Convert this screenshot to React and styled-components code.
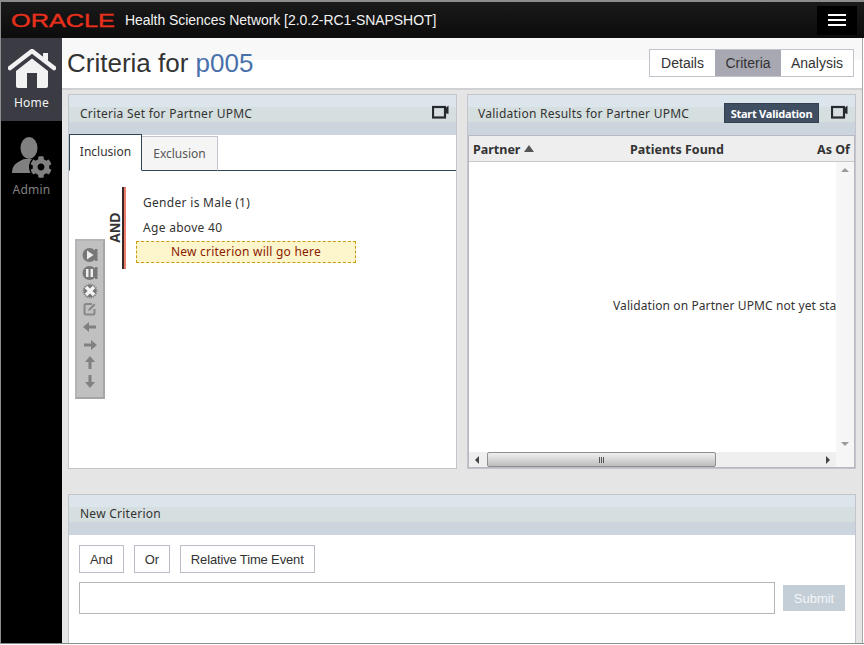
import React from 'react';
import styled, { createGlobalStyle } from 'styled-components';
import { FaCog } from 'react-icons/fa';

const GlobalStyle = createGlobalStyle`
  html, body {
    margin: 0;
    padding: 0;
    background: #fff;
  }
  * {
    box-sizing: border-box;
  }
`;

const uiFont = `"Noto Sans", "Open Sans", sans-serif`;
const arial = `"Liberation Sans", Arial, sans-serif`;

const Frame = styled.div`
  width: 864px;
  height: 644px;
  display: flex;
  flex-direction: column;
  overflow: hidden;
  border-top: 2px solid #8c8c8c;
  border-left: 1px solid #8c8c8c;
  border-bottom: 1px solid #8c8c8c;
  font-family: ${uiFont};
`;

const Header = styled.header`
  height: 36px;
  flex: none;
  display: flex;
  align-items: center;
  padding-left: 10px;
  background: linear-gradient(#1a1a1a, #111 60%, #0c0c0c);
`;

const Logo = styled.svg`
  width: 106px;
  height: 16px;
  flex: none;
  overflow: visible;
`;

const Product = styled.div`
  margin-left: 8px;
  color: #f2f2f2;
  font: 14px ${arial};
  letter-spacing: -0.05px;
  white-space: nowrap;
`;

const MenuButton = styled.button`
  margin-left: auto;
  margin-right: 7px;
  width: 40px;
  height: 29px;
  border: 0;
  padding: 0;
  background: #000;
  display: flex;
  flex-direction: column;
  align-items: center;
  justify-content: center;
  gap: 3px;
  span {
    display: block;
    width: 18px;
    height: 2px;
    background: #fff;
  }
`;

const Body = styled.div`
  flex: 1;
  min-height: 0;
  display: flex;
`;

const Sidebar = styled.nav`
  width: 61px;
  flex: none;
  background: #000;
`;

const SideItem = styled.div`
  height: 83px;
  display: flex;
  flex-direction: column;
  align-items: center;
  padding-top: ${(props) => props.$top}px;
  background: ${(props) => (props.$active ? '#3b3b43' : '#000')};
  color: ${(props) => (props.$active ? '#f4f4f4' : '#808080')};
  font: 12px ${uiFont};
  letter-spacing: 0.2px;
  svg {
    flex: none;
  }
`;

const SideLabel = styled.span`
  margin-top: ${(props) => props.$gap}px;
  line-height: 16px;
`;

const Main = styled.main`
  width: 801px;
  flex: none;
  display: flex;
  flex-direction: column;
  background: #e5e5e5;
  border-right: 1px solid #a8a8a8;
`;

const TitleBar = styled.div`
  height: 52px;
  flex: none;
  display: flex;
  align-items: flex-start;
  justify-content: space-between;
  padding: 0 8px 0 5px;
  background: linear-gradient(#f8f8f8 22px, #fff 22px);
  border-bottom: 2px solid #cfcfd4;
`;

const Title = styled.h1`
  margin: 8px 0 0;
  font: 400 26px/34px ${arial};
  color: #333;
`;

const Accent = styled.span`
  color: #4a70ac;
`;

const Switcher = styled.div`
  display: flex;
  margin-top: 11px;
  border: 1px solid #c2c2ca;
`;

const SwitchItem = styled.div`
  height: 26px;
  width: ${(props) => props.$width}px;
  display: flex;
  align-items: center;
  justify-content: center;
  font: 14px ${arial};
  color: #333;
  background: ${(props) => (props.$active ? '#a8a8b2' : '#fff')};
`;

const Content = styled.div`
  flex: 1;
  min-height: 0;
  display: flex;
  flex-direction: column;
  gap: 25px;
  padding: 4px 6px 0;
`;

const PanelGrid = styled.div`
  height: 375px;
  flex: none;
  display: grid;
  grid-template-columns: 389px 389px;
  column-gap: 10px;
`;

const Panel = styled.section`
  display: flex;
  flex-direction: column;
  min-height: 0;
  min-width: 0;
  flex: ${(props) => (props.$grow ? 1 : 'initial')};
  width: ${(props) => (props.$grow ? '788px' : 'auto')};
  background: #fff;
  border: 1px solid #c4c4cc;
  border-bottom-width: ${(props) => (props.$grow ? 0 : '1px')};
`;

const PanelHeader = styled.div`
  height: 40px;
  flex: none;
  display: flex;
  align-items: center;
  padding: 0 7px 2px ${(props) => props.$left}px;
  background: linear-gradient(
    #dce5ec 0 12px,
    #d6dfdf 12px 27px,
    #ccd5de 27px
  );
`;

const PanelTitle = styled.h2`
  margin: 0;
  font: 400 12px/16px ${uiFont};
  letter-spacing: 0.25px;
  color: #333;
  white-space: nowrap;
`;

const ExpandIcon = styled.svg`
  width: 17px;
  height: 14px;
  flex: none;
  margin-left: auto;
  margin-bottom: 4px;
`;

const StartButton = styled.button`
  margin-left: auto;
  margin-right: 12px;
  margin-bottom: 2px;
  height: 20px;
  width: 95px;
  padding: 0;
  border: 1px solid #33404f;
  background: #404e62;
  color: #fff;
  font: 700 11px ${uiFont};
  letter-spacing: -0.25px;
  & + svg {
    margin-left: 0;
  }
`;

const TabRow = styled.div`
  height: 36px;
  flex: none;
  display: flex;
  align-items: flex-end;
  border-bottom: 1px solid #2f4656;
`;

const Tab = styled.div`
  height: ${(props) => (props.$active ? 37 : 35)}px;
  margin-bottom: -1px;
  width: ${(props) => props.$width}px;
  display: flex;
  align-items: center;
  justify-content: center;
  font: 12px ${uiFont};
  padding-bottom: ${(props) => (props.$active ? 3 : 0)}px;
  color: ${(props) => (props.$active ? '#333' : '#555')};
  background: ${(props) => (props.$active ? '#fff' : '#f5f5f5')};
  border-top: 1px solid ${(props) => (props.$active ? '#2f4656' : '#c4c4cc')};
  border-right: 1px solid ${(props) => (props.$active ? '#2f4656' : '#c4c4cc')};
  border-left: ${(props) => (props.$active ? '1px solid #2f4656' : '0')};
  border-bottom: ${(props) => (props.$active ? '1px solid #fff' : '1px solid #2f4656')};
`;

const TabBody = styled.div`
  position: relative;
  flex: 1;
  padding: 16px 0 0 38px;
`;

const Group = styled.div`
  display: flex;
  align-items: stretch;
`;

const Operator = styled.div`
  width: 15px;
  display: flex;
  align-items: center;
  justify-content: center;
  writing-mode: vertical-rl;
  transform: rotate(180deg);
  font: 700 14px ${arial};
  color: #333;
`;

const OperatorBar = styled.div`
  width: 4px;
  flex: none;
  border-left: 2px solid #3a2622;
  border-right: 2px solid #ee7f6e;
`;

const Rows = styled.div`
  display: flex;
  flex-direction: column;
  padding: 3px 0 6px 10px;
`;

const Row = styled.div`
  height: 25px;
  padding-left: 7px;
  display: flex;
  align-items: center;
  font: 12px ${uiFont};
  letter-spacing: 0.3px;
  color: #333;
`;

const Placeholder = styled.div`
  width: 220px;
  height: 22px;
  margin-top: 1px;
  padding-bottom: 1px;
  display: flex;
  align-items: center;
  justify-content: center;
  background: #fdf5cc;
  border: 1px dashed #c69c10;
  font: 12px ${uiFont};
  letter-spacing: 0.22px;
  color: #8a1c00;
`;

const ToolStrip = styled.div`
  position: absolute;
  left: 6px;
  top: 68px;
  width: 30px;
  height: 160px;
  padding-top: 5px;
  display: flex;
  flex-direction: column;
  align-items: center;
  background: #c0c0c0;
  border: 2px solid #a6a6a8;
  border-top-color: #b4b4b8;
  border-left-color: #b4b4b8;
`;

const ToolIcon = styled.svg`
  width: 18px;
  height: 18px;
  flex: none;
`;

const ResultsFrame = styled.div`
  flex: 1;
  min-height: 0;
  display: flex;
  flex-direction: column;
  border-top: 1px solid #b8b8c2;
  border-right: 1px solid #b8b8c2;
  border-left: 1px solid #b8b8c2;
  position: relative;
`;

const TableHead = styled.div`
  height: 26px;
  flex: none;
  position: relative;
  background: #eeeeee;
  border-bottom: 1px solid #c8c8c8;
  font: 700 12.5px/27px ${uiFont};
  color: #333;
`;

const HeadCell = styled.span`
  position: absolute;
  top: 0;
  left: ${(props) => props.$left}px;
  white-space: nowrap;
  display: flex;
  align-items: center;
  gap: 4px;
`;

const SortArrow = styled.i`
  display: block;
  width: 0;
  height: 0;
  border-left: 5px solid transparent;
  border-right: 5px solid transparent;
  border-bottom: 7px solid #555;
  margin-bottom: 3px;
`;

const TableBody = styled.div`
  flex: 1;
  min-height: 0;
  display: flex;
`;

const Viewport = styled.div`
  flex: 1;
  min-width: 0;
  overflow: hidden;
  display: flex;
  align-items: center;
  padding: 0 0 4px 144px;
  white-space: nowrap;
  font: 12px ${uiFont};
  letter-spacing: 0.1px;
  color: #333;
`;

const VScroll = styled.div`
  width: 18px;
  flex: none;
  display: flex;
  flex-direction: column;
  justify-content: space-between;
  align-items: center;
  padding: 6px 0;
  background: #f6f6f6;
`;

const Arrow = styled.i`
  display: block;
  width: 0;
  height: 0;
  border-style: solid;
  border-color: transparent;
  ${(props) => props.$dir === 'up' && 'border-width: 0 4px 4px; border-bottom-color: #999;'}
  ${(props) => props.$dir === 'down' && 'border-width: 4px 4px 0; border-top-color: #999;'}
  ${(props) => props.$dir === 'left' && 'border-width: 4px 4px 4px 0; border-right-color: #444;'}
  ${(props) => props.$dir === 'right' && 'border-width: 4px 0 4px 4px; border-left-color: #444;'}
`;

const HScroll = styled.div`
  height: 16px;
  flex: none;
  display: flex;
  align-items: center;
  background: #efefef;
  border-bottom: 1px solid #b8b8c2;
  padding-left: 6px;
`;

const Thumb = styled.div`
  width: 229px;
  height: 15px;
  margin-left: 8px;
  display: flex;
  align-items: center;
  justify-content: center;
  gap: 1px;
  background: linear-gradient(#efefef, #dadada 45%, #bcbcbc);
  border: 1px solid #8f8f8f;
  border-radius: 2px;
  span {
    width: 1px;
    height: 6px;
    background: #555;
  }
`;

const HEnd = styled.div`
  margin-left: auto;
  display: flex;
  align-items: center;
  height: 100%;
`;

const Corner = styled.div`
  width: 18px;
  height: 100%;
  margin-left: 6px;
  background: #f6f6f6;
`;

const FormBody = styled.div`
  flex: 1;
  padding: 10px 10px 0;
  display: flex;
  flex-direction: column;
  gap: 9px;
`;

const ButtonRow = styled.div`
  display: flex;
  gap: 10px;
`;

const PlainButton = styled.button`
  height: 28px;
  padding: 0 10px;
  background: #fff;
  border: 1px solid #bcbcc6;
  font: 13px ${arial};
  letter-spacing: -0.15px;
  color: #333;
`;

const InputRow = styled.div`
  display: flex;
  align-items: center;
`;

const CriterionInput = styled.input`
  width: 696px;
  height: 32px;
  flex: none;
  background: #fff;
  border: 1px solid #b8b4b8;
  outline: 0;
`;

const SubmitButton = styled.button`
  width: 62px;
  height: 26px;
  margin-left: 8px;
  padding: 0;
  border: 0;
  background: #c4ced6;
  color: #f4f6f8;
  font: 13px ${arial};
`;

const HomeIcon = () => (
  <svg width="48" height="40" viewBox="0 0 48 40">
    <path d="M2 19 L24 2 L46 19" fill="none" stroke="#f2f2f2" strokeWidth="4.5" strokeLinejoin="round" strokeLinecap="round" />
    <path d="M8 22 L24 9.5 L40 22 V37 a2 2 0 0 1 -2 2 H29 V24 H19 V39 H10 a2 2 0 0 1 -2 -2 Z" fill="#f2f2f2" />
    <path d="M35 4 h5 v8 l-5 -4 Z" fill="#f2f2f2" />
  </svg>
);

const AdminIcon = () => (
  <svg width="42" height="42" viewBox="0 0 42 42">
    <ellipse cx="18" cy="12" rx="8.5" ry="11" fill="#808080" />
    <path d="M1 37 C1 28 7 26 13 23 H23 C29 26 34 28 34 37 Z" fill="#808080" />
    <circle cx="30" cy="31" r="12" fill="#000" />
    <FaCog x="19" y="20" size="22" color="#808080" />
  </svg>
);

const PlayIcon = () => (
  <ToolIcon viewBox="0 0 18 18">
    <rect x="14" y="3" width="2.5" height="12" fill="#777" />
    <circle cx="8.5" cy="9" r="7" fill="#777" />
    <path d="M6 4.5 L12.5 9 L6 13.5 Z" fill="#eee" />
  </ToolIcon>
);

const PauseIcon = () => (
  <ToolIcon viewBox="0 0 18 18">
    <rect x="14" y="3" width="2.5" height="12" fill="#777" />
    <circle cx="8.5" cy="9" r="7" fill="#777" />
    <rect x="5" y="5" width="2.5" height="8" fill="#eee" />
    <rect x="9.5" y="5" width="2.5" height="8" fill="#eee" />
  </ToolIcon>
);

const StopIcon = () => (
  <ToolIcon viewBox="0 0 18 18">
    <circle cx="9" cy="9" r="6.5" fill="#777" stroke="#888" strokeWidth="2" strokeDasharray="1 1" />
    <path d="M5 5 L13 13 M13 5 L5 13" stroke="#f4f4f4" strokeWidth="3.4" />
  </ToolIcon>
);

const EditIcon = () => (
  <ToolIcon viewBox="0 0 18 18">
    <path d="M11 4 H5 a1.5 1.5 0 0 0 -1.5 1.5 V13 a1.5 1.5 0 0 0 1.5 1.5 H12 a1.5 1.5 0 0 0 1.5 -1.5 V9" fill="none" stroke="#888" strokeWidth="2" />
    <path d="M7 11 L8 8.5 L13 3.5 L14.5 5 L9.5 10 Z" fill="#888" />
  </ToolIcon>
);

const MoveIcon = ({ angle }) => (
  <ToolIcon viewBox="0 0 18 18">
    <path
      d="M2 9 L8 4 V7.5 H15 V10.5 H8 V14 Z"
      fill="#808080"
      transform={`rotate(${angle} 9 9)`}
    />
  </ToolIcon>
);

const Expand = () => (
  <ExpandIcon viewBox="0 0 17 14">
    <rect x="1" y="2" width="12" height="10.5" fill="none" stroke="#26292e" strokeWidth="2.2" />
    <path d="M13 3.5 L16.5 0.5 V9 L13 8 Z" fill="#26292e" />
  </ExpandIcon>
);

export default function App() {
  return (
    <>
      <GlobalStyle />
      <Frame>
        <Header>
          <Logo viewBox="0 0 106 16">
            <text
              x="0"
              y="14.5"
              textLength="104"
              lengthAdjust="spacingAndGlyphs"
              fontFamily="Liberation Sans"
              fontWeight="400"
              fontSize="18"
              fill="#e8301c"
              stroke="#e8301c"
              strokeWidth="0.35"
            >
              ORACLE
            </text>
          </Logo>
          <Product>Health Sciences Network [2.0.2-RC1-SNAPSHOT]</Product>
          <MenuButton aria-label="Menu">
            <span />
            <span />
            <span />
          </MenuButton>
        </Header>
        <Body>
          <Sidebar>
            <SideItem $active $top={11}>
              <HomeIcon />
              <SideLabel $gap={6}>Home</SideLabel>
            </SideItem>
            <SideItem $top={15}>
              <AdminIcon />
              <SideLabel $gap={4}>Admin</SideLabel>
            </SideItem>
          </Sidebar>
          <Main>
            <TitleBar>
              <Title>
                Criteria for <Accent>p005</Accent>
              </Title>
              <Switcher>
                <SwitchItem $width={65}>Details</SwitchItem>
                <SwitchItem $width={66} $active>Criteria</SwitchItem>
                <SwitchItem $width={72}>Analysis</SwitchItem>
              </Switcher>
            </TitleBar>
            <Content>
              <PanelGrid>
                <Panel>
                  <PanelHeader $left={11}>
                    <PanelTitle>Criteria Set for Partner UPMC</PanelTitle>
                    <Expand />
                  </PanelHeader>
                  <TabRow>
                    <Tab $active $width={73}>Inclusion</Tab>
                    <Tab $width={76}>Exclusion</Tab>
                  </TabRow>
                  <TabBody>
                    <Group>
                      <Operator>AND</Operator>
                      <OperatorBar />
                      <Rows>
                        <Row>Gender is Male (1)</Row>
                        <Row>Age above 40</Row>
                        <Placeholder>New criterion will go here</Placeholder>
                      </Rows>
                    </Group>
                    <ToolStrip>
                      <PlayIcon />
                      <PauseIcon />
                      <StopIcon />
                      <EditIcon />
                      <MoveIcon angle={0} />
                      <MoveIcon angle={180} />
                      <MoveIcon angle={90} />
                      <MoveIcon angle={270} />
                    </ToolStrip>
                  </TabBody>
                </Panel>
                <Panel>
                  <PanelHeader $left={10}>
                    <PanelTitle>Validation Results for Partner UPMC</PanelTitle>
                    <StartButton>Start Validation</StartButton>
                    <Expand />
                  </PanelHeader>
                  <ResultsFrame>
                    <TableHead>
                      <HeadCell $left={4}>Partner <SortArrow /></HeadCell>
                      <HeadCell $left={161}>Patients Found</HeadCell>
                      <HeadCell $left={348}>As Of</HeadCell>
                    </TableHead>
                    <TableBody>
                      <Viewport>Validation on Partner UPMC not yet started</Viewport>
                      <VScroll>
                        <Arrow $dir="up" />
                        <Arrow $dir="down" />
                      </VScroll>
                    </TableBody>
                    <HScroll>
                      <Arrow $dir="left" />
                      <Thumb>
                        <span />
                        <span />
                        <span />
                      </Thumb>
                      <HEnd>
                        <Arrow $dir="right" />
                        <Corner />
                      </HEnd>
                    </HScroll>
                  </ResultsFrame>
                </Panel>
              </PanelGrid>
              <Panel $grow>
                <PanelHeader $left={11}>
                  <PanelTitle>New Criterion</PanelTitle>
                </PanelHeader>
                <FormBody>
                  <ButtonRow>
                    <PlainButton>And</PlainButton>
                    <PlainButton>Or</PlainButton>
                    <PlainButton>Relative Time Event</PlainButton>
                  </ButtonRow>
                  <InputRow>
                    <CriterionInput />
                    <SubmitButton>Submit</SubmitButton>
                  </InputRow>
                </FormBody>
              </Panel>
            </Content>
          </Main>
        </Body>
      </Frame>
    </>
  );
}
